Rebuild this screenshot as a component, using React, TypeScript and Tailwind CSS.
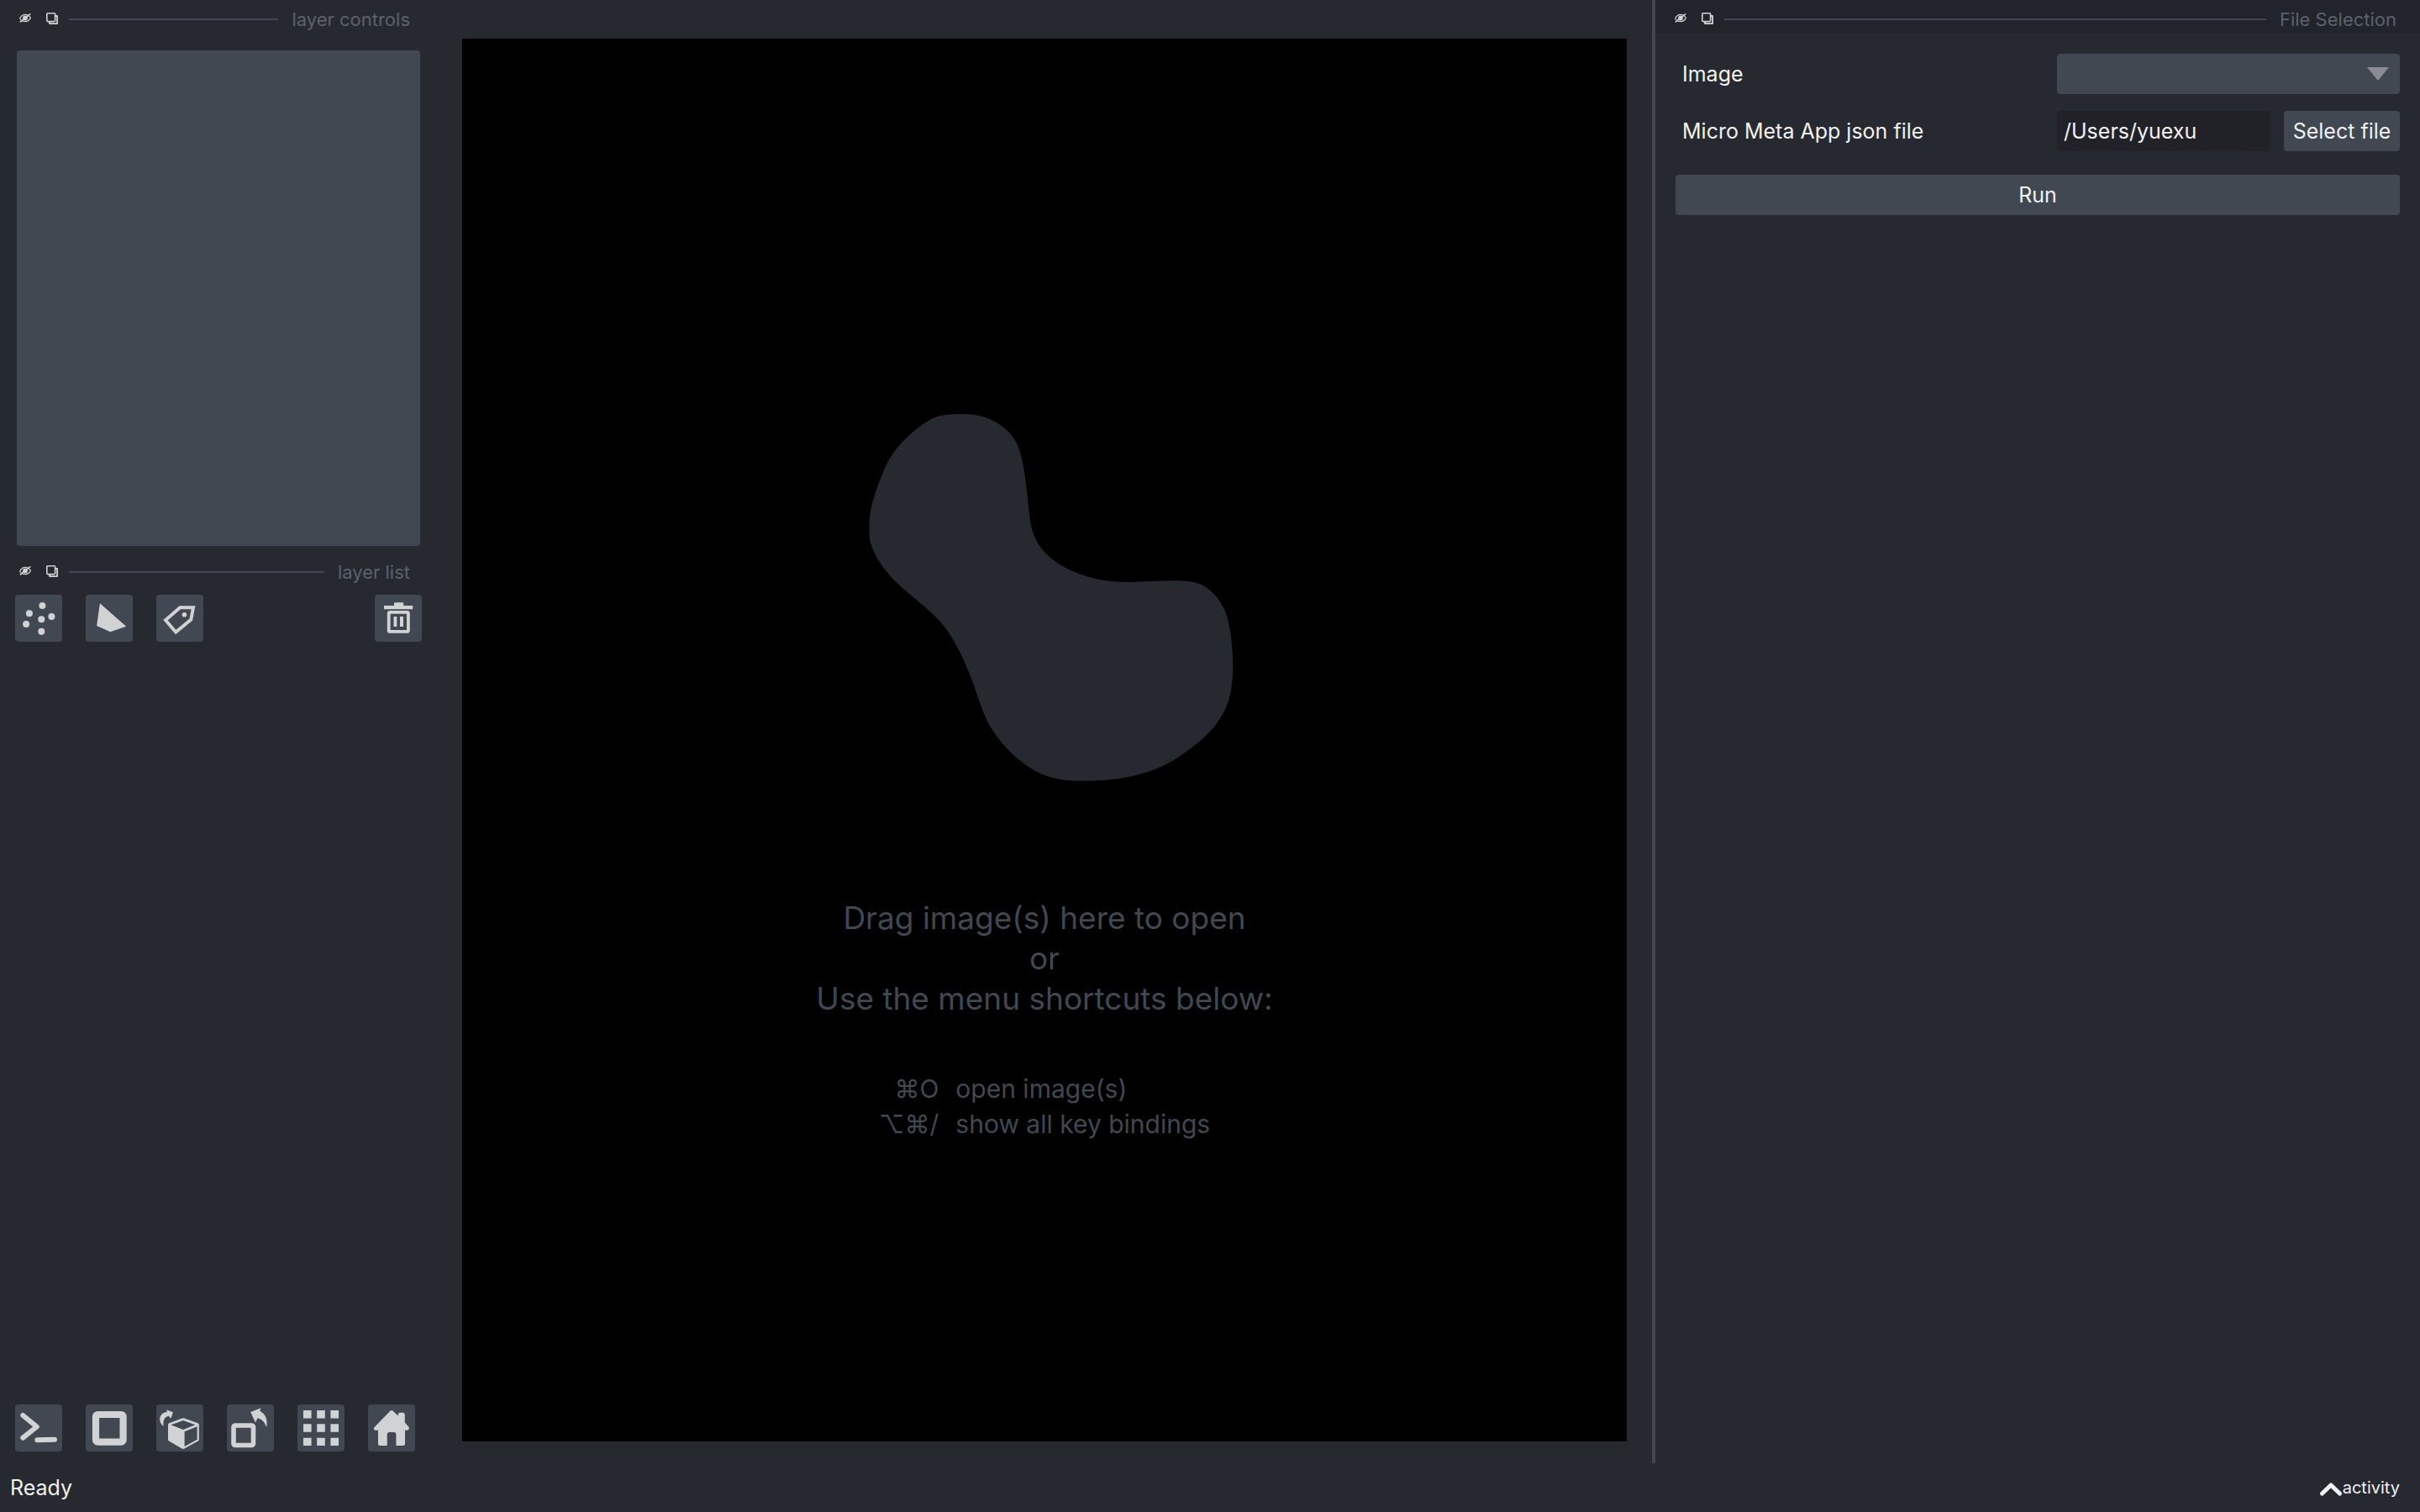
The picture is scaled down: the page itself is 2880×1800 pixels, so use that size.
import type { ReactNode } from "react";

const EyeOffIcon = () => (
  <svg viewBox="0 0 14 14" className="size-3.5" fill="none" stroke="currentColor" aria-hidden="true">
    <path d="M.6 7C2.600 3.200 5 2.400 7 2.400S11.600 3.200 13.400 6.400C11.600 9.800 9 10.600 7 10.600S2.400 9.800 .6 7Z" strokeWidth="1.200" />
    <circle cx="7" cy="6.500" r="2.900" fill="currentColor" stroke="none" />
    <path d="M.8 11.400L13.300 1.400" strokeWidth="1.400" />
  </svg>
);

const FloatIcon = () => (
  <svg viewBox="0 0 14 14" className="size-3.5" fill="none" stroke="currentColor" strokeWidth="1.600" aria-hidden="true">
    <rect x=".8" y=".8" width="9.800" height="9.800" rx="1" />
    <path d="M11 4H13.100V13.100H4V11" strokeWidth="1.800" strokeLinejoin="round" />
  </svg>
);

const PointsIcon = () => (
  <>
    <circle cx="32.4" cy="13" r="4" />
    <circle cx="16.9" cy="22.3" r="4" />
    <circle cx="43.4" cy="26" r="4" />
    <circle cx="31.3" cy="29.3" r="4" />
    <circle cx="13.1" cy="35" r="4" />
    <circle cx="31.3" cy="43.7" r="4" />
  </>
);

const ShapesIcon = () => <path d="M16.900 10.300L48.200 37.700L29.300 44.300L13.100 37Z" />;

const TagIcon = () => (
  <>
    <path d="M28.300 15.300H44L41.300 29.600L23.200 44.600L11 30.200Z" fill="none" stroke="currentColor" strokeWidth="3.900" />
    <circle cx="33.400" cy="23.700" r="2.800" />
  </>
);

const TrashIcon = () => (
  <>
    <path d="M23 13V10.500Q23 9.300 24.200 9.300H33Q34.200 9.300 34.200 10.500V13H45.200V17.300H11V13Z" />
    <rect x="16.700" y="20.900" width="23.200" height="23" rx="1.500" fill="none" stroke="currentColor" strokeWidth="3.800" />
    <rect x="22.500" y="26" width="3.800" height="12" />
    <rect x="30" y="26" width="4" height="12" />
  </>
);

const ConsoleIcon = () => (
  <g fill="none" stroke="currentColor" strokeWidth="6" strokeLinecap="round" strokeLinejoin="round">
    <path d="M9.300 13L25.800 26.500L9.300 39.700" />
    <path d="M26.300 42.200L47 41.800" />
  </g>
);

const SquareIcon = () => (
  <rect x="12" y="12" width="32.600" height="32.600" rx="2.500" fill="none" stroke="currentColor" strokeWidth="8.200" />
);

const CubeIcon = () => (
  <>
    <path
      fillRule="evenodd"
      d="M32 16.200Q32.700 16.200 33.500 16.600L49.500 22.200Q50.800 22.800 50.800 24V41.800Q50.800 43 49.800 43.600L33.500 52.600Q32 53.400 30.500 52.600L15 43.600Q14 43 14 41.800V24Q14 22.800 15.200 22.200L30.500 16.600Q31.300 16.200 32 16.200ZM32 18.900L17.500 24.200L32 30L46.400 24.200ZM48.600 26.300L33.600 32.200V50L48.600 41.700Z"
    />
    <path d="M12 6.300L20 9.300L17.300 16.800L14.700 13.700C10 14.800 7.600 18.500 8.700 25.800C4.500 23 3 17.500 5.200 13.500C6.800 10.700 9.500 9 13 8.800Z" />
  </>
);

const TransposeIcon = () => (
  <>
    <rect x="8" y="25" width="23.500" height="23.500" rx="2" fill="none" stroke="currentColor" strokeWidth="5.600" />
    <path d="M28.200 9L40.300 4.200L39.300 7.800C46 11.500 48.800 18 47.200 27C45 21 41.500 17 36.500 16.200L34 21.500Z" />
  </>
);

const GridIcon = () => (
  <path d="M7 7h9.600v9.400H7zM23.200 7h9.600v9.400h-9.600zM39.400 7H49v9.400h-9.600zM7 23.300h9.600v9.400H7zM23.200 23.300h9.600v9.400h-9.600zM39.400 23.300H49v9.400h-9.600zM7 39.700h9.600V49H7zM23.200 39.700h9.600V49h-9.600zM39.400 39.700H49V49h-9.600z" />
);

const HomeIcon = () => (
  <path d="M26.300 7.700Q28 6.200 29.700 7.700L35.800 13.600V12Q35.800 9.700 38 9.700H41.600Q43.800 9.700 43.800 12V21.500L48.300 26.600Q50 30.600 46.400 30.700H44V47Q44 49 42 49H33.400V36Q33.400 33 30.500 33H25.600Q22.700 33 22.700 36V49H14Q12 49 12 47V30.700H9.400Q5.500 30.500 7.600 27Z" />
);

function ToolButton({ label, children }: { label: string; children: ReactNode }) {
  return (
    <button type="button" aria-label={label} className="size-14 shrink-0 rounded-sm bg-[#414851] text-[#d1d2d4]">
      <svg viewBox="0 0 56 56" className="size-14" fill="currentColor" aria-hidden="true">
        {children}
      </svg>
    </button>
  );
}

function DockTitle({ title }: { title: string }) {
  return (
    <header className="flex h-10 items-center pt-1.5 pr-7 pl-[23px]">
      <div className="flex gap-[18px] pb-0.5 text-[#d1d2d4]">
        <button type="button" aria-label={`Hide ${title}`}>
          <EyeOffIcon />
        </button>
        <button type="button" aria-label={`Float ${title}`}>
          <FloatIcon />
        </button>
      </div>
      <div className="mr-4 ml-[13px] h-0.5 flex-1 bg-[#414851]" />
      <h2 className="text-[22px] leading-7 text-[#5a626c]">{title}</h2>
    </header>
  );
}

function Sidebar() {
  return (
    <aside className="flex w-[550px] shrink-0 flex-col">
      <section className="pr-[34px]">
        <DockTitle title="layer controls" />
      </section>
      <div className="mt-5 mr-[50px] ml-5 h-[590px] rounded-sm bg-[#414851]" />
      <section className="mt-2 pr-[34px]">
        <DockTitle title="layer list" />
      </section>
      <div className="mt-2.5 mr-12 ml-[18px] flex gap-7">
        <ToolButton label="New points layer"><PointsIcon /></ToolButton>
        <ToolButton label="New shapes layer"><ShapesIcon /></ToolButton>
        <ToolButton label="New labels layer"><TagIcon /></ToolButton>
        <div className="flex flex-1 justify-end">
          <ToolButton label="Delete selected layers"><TrashIcon /></ToolButton>
        </div>
      </div>
      <div className="mt-auto mb-3.5 ml-[18px] flex gap-7">
        <ToolButton label="Toggle console"><ConsoleIcon /></ToolButton>
        <ToolButton label="Toggle 2D/3D view"><SquareIcon /></ToolButton>
        <ToolButton label="Roll dimensions"><CubeIcon /></ToolButton>
        <ToolButton label="Transpose dimensions"><TransposeIcon /></ToolButton>
        <ToolButton label="Toggle grid mode"><GridIcon /></ToolButton>
        <ToolButton label="Reset view"><HomeIcon /></ToolButton>
      </div>
    </aside>
  );
}

function Welcome() {
  return (
    <main className="mt-[46px] mr-[30px] mb-[26px] flex flex-1 flex-col items-center justify-center bg-black pt-[90px] text-[#414851]">
      <svg viewBox="-21 99 1500 1311" className="h-[437px] w-[500px]" fill="#262930" aria-hidden="true">
        <path d="M433 99C385 99 355 103 335 112C280 138 205 205 175 260C145 315 115 405 108 445C102 480 102 525 106 550C118 600 150 650 200 700C250 748 325 800 365 850C405 900 435 960 465 1035C485 1085 505 1160 530 1205C570 1275 640 1350 725 1387C760 1402 810 1409 850 1409C900 1409 930 1408 960 1405C1050 1396 1140 1370 1210 1322C1290 1268 1350 1215 1380 1140C1395 1105 1402 1050 1402 1000C1400 900 1390 840 1370 795C1350 750 1310 710 1265 700C1210 688 1110 697 1040 699C960 699 900 690 830 660C760 630 700 580 683 505C668 430 665 300 640 230C622 165 565 125 510 108C485 100 460 99 433 99Z" />
      </svg>
      <p className="mt-[139px] text-center text-[37px] leading-[48px]">
        Drag image(s) here to open
        <br />
        or
        <br />
        Use the menu shortcuts below:
      </p>
      <table className="mt-[62px] text-[30px] leading-[42px]">
        <tbody>
          <tr>
            <th scope="row" className="p-0 pr-5 text-right font-normal">⌘O</th>
            <td className="p-0">open image(s)</td>
          </tr>
          <tr>
            <th scope="row" className="p-0 pr-5 text-right font-normal">⌥⌘/</th>
            <td className="p-0">show all key bindings</td>
          </tr>
        </tbody>
      </table>
    </main>
  );
}

function FileSelection() {
  return (
    <aside className="w-[914px] shrink-0 border-l-4 border-[#414851]">
      <div className="bg-[#21242b]">
        <DockTitle title="File Selection" />
      </div>
      <form className="flex flex-col px-6 pt-6 text-[25px] leading-8" onSubmit={(e) => e.preventDefault()}>
        <div className="flex items-center">
          <label htmlFor="image" className="flex-1 pl-2">Image</label>
          <div className="relative w-[408px]">
            <select id="image" className="block h-12 w-full appearance-none rounded-sm bg-[#414851] px-2">
              <option value=""></option>
            </select>
            <svg viewBox="0 0 26 16" className="pointer-events-none absolute top-4 right-[13px] h-4 w-[26px]" fill="#8a8b93" aria-hidden="true">
              <path d="M0 0H26L13 16Z" />
            </svg>
          </div>
        </div>
        <div className="mt-5 flex items-center">
          <label htmlFor="json-file" className="flex-1 pl-2">Micro Meta App json file</label>
          <div className="flex w-[408px] gap-4">
            <input id="json-file" type="text" defaultValue="/Users/yuexu" className="h-12 min-w-0 flex-1 rounded-sm bg-[#212227] px-2" />
            <button type="button" className="h-12 w-[138px] rounded-sm bg-[#414851]">Select file</button>
          </div>
        </div>
        <button type="submit" className="mt-7 h-12 rounded-sm bg-[#414851]">Run</button>
      </form>
    </aside>
  );
}

export default function App() {
  return (
    <div className="flex min-h-screen flex-col bg-[#262930] font-['Inter','Noto_Sans',sans-serif] text-[#f0f1f2]">
      <div className="flex flex-1">
        <Sidebar />
        <Welcome />
        <FileSelection />
      </div>
      <footer className="flex h-[58px] items-center justify-between pr-6 pl-3">
        <span className="text-[25px] leading-8">Ready</span>
        <button type="button" className="flex items-center text-xl">
          <svg viewBox="0 0 28 18" className="mt-1 h-[18px] w-7" fill="none" stroke="currentColor" strokeWidth="5" strokeLinecap="round" strokeLinejoin="round" aria-hidden="true">
            <path d="M3.500 14L14 4L24.500 14" />
          </svg>
          activity
        </button>
      </footer>
    </div>
  );
}
